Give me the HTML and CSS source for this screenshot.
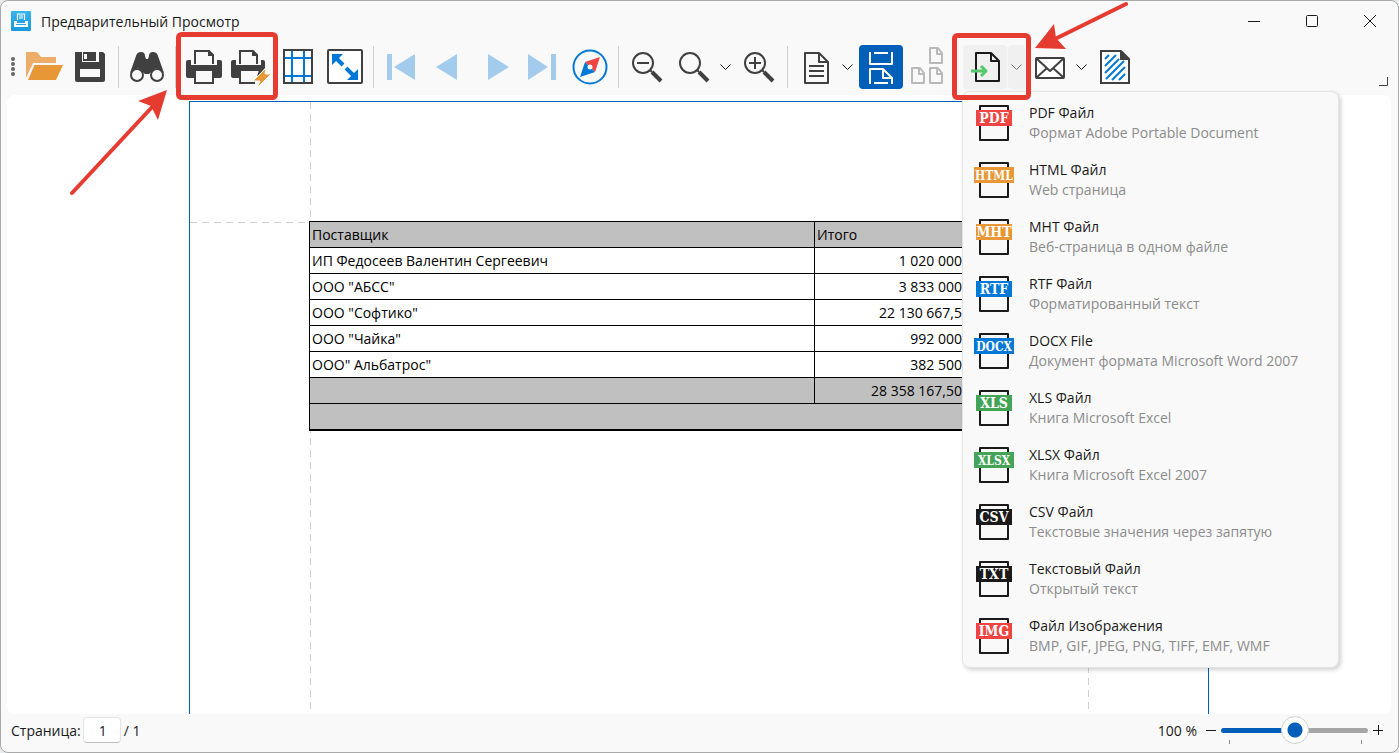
FILE: index.html
```html
<!DOCTYPE html>
<html lang="ru">
<head>
    <meta charset="UTF-8">
    <meta name="viewport" content="width=device-width, initial-scale=1.0">
    <title>Предварительный Просмотр</title>
    <link rel="stylesheet" href="styles.css">
</head>
<body>
    <div class="window">
        <header class="titlebar">
            <svg class="app-icon" viewBox="0 0 20 20">
                <defs>
                    <linearGradient id="appBlue" x1="0" y1="0" x2="0" y2="1">
                        <stop offset="0" stop-color="#35b4ee"/>
                        <stop offset="1" stop-color="#1a98dc"/>
                    </linearGradient>
                </defs>
                <rect width="20" height="20" rx="1" fill="url(#appBlue)"/>
                <path d="M6.500 9V3h7v6M8 5h4M8 7h4" fill="none" stroke="#fff" stroke-width="1.200"/>
                <path d="M3 10h3v2h8v-2h3v6H3z" fill="#fff"/>
                <path d="M5 13.500h10" stroke="#2aa6e4"/>
            </svg>
            <h1>Предварительный Просмотр</h1>
            <div class="window-buttons">
                <button type="button" aria-label="Свернуть"><svg viewBox="0 0 12 12"><path d="M0 6.500h12"/></svg></button>
                <button type="button" aria-label="Развернуть"><svg viewBox="0 0 12 12"><rect x=".5" y=".5" width="11" height="11" rx="1"/></svg></button>
                <button type="button" aria-label="Закрыть"><svg viewBox="0 0 12 12"><path d="M0 0l12 12M12 0L0 12"/></svg></button>
            </div>
        </header>

        <nav class="toolbar">
            <svg class="grip" viewBox="0 0 7 44"><circle cx="2" cy="14" r="2"/><circle cx="2" cy="19" r="2"/><circle cx="2" cy="24" r="2"/><circle cx="2" cy="29" r="2"/></svg>
            <button type="button" class="tool" aria-label="Открыть">
                <svg viewBox="0 0 44 44">
                    <path d="M5 7h11l4 5h15v6H12L5 33z" fill="#edad69"/>
                    <path d="M13.500 20H42l-7 15H7z" fill="#e79736"/>
                </svg>
            </button>
            <button type="button" class="tool" aria-label="Сохранить">
                <svg viewBox="0 0 44 44">
                    <path d="M7 7h7v10h17V7h4l2 2v26q0 2-2 2H9q-2 0-2-2zM12 24v8h20v-8z" fill="#404040" fill-rule="evenodd"/>
                    <path d="M15 7h13v9H15zM16 9v5h3V9z" fill="#404040" fill-rule="evenodd"/>
                </svg>
            </button>
            <span class="separator"></span>
            <button type="button" class="tool" aria-label="Поиск">
                <svg viewBox="0 0 44 44">
                    <path d="M5 28l6-17q1-4 5-4t4 4l1 3h2l1-3q0-4 4-4t5 4l6 17-8-5-7 6h-4l-7-6z" fill="#404040"/>
                    <circle cx="12" cy="30" r="6" fill="#f9f9f9" stroke="#404040" stroke-width="2"/>
                    <circle cx="32" cy="30" r="6" fill="#f9f9f9" stroke="#404040" stroke-width="2"/>
                </svg>
            </button>
            <span class="separator"></span>
            <button type="button" class="tool" aria-label="Печать">
                <svg viewBox="0 0 44 44">
                    <path d="M4 17q0-2 2-2h3v5h26v-5h3q2 0 2 2v14q0 2-2 2H6q-2 0-2-2z" fill="#404040"/>
                    <path d="M13 19V6h14l4 4v9" fill="#f9f9f9" stroke="#404040" stroke-width="2"/>
                    <path d="M26 5v6h6z" fill="#404040"/>
                    <path d="M13 25h18v13H13z" fill="#f9f9f9" stroke="#404040" stroke-width="2"/>
                </svg>
            </button>
            <button type="button" class="tool" aria-label="Быстрая печать">
                <svg viewBox="0 0 44 44">
                    <path d="M2 17q0-2 2-2h3v5h25v-5h2q2 0 2 2v6l-9 10H4q-2 0-2-2z" fill="#404040"/>
                    <path d="M11 19V6h13l4 4v9" fill="#f9f9f9" stroke="#404040" stroke-width="2"/>
                    <path d="M23 5v6h6z" fill="#404040"/>
                    <path d="M30 25H11v13h15" fill="#f9f9f9" stroke="#404040" stroke-width="2"/>
                    <path d="M37 23L24 36h7l-3 7 14-14h-6z" fill="#e79736" stroke="#f9f9f9"/>
                </svg>
            </button>
            <button type="button" class="tool" aria-label="Поля">
                <svg viewBox="0 0 44 44">
                    <path d="M8 5h28v33H8z" fill="#fff"/>
                    <path d="M16 6v31M28 6v31M9 13h26M9 31h26" stroke="#0078d7" stroke-width="2"/>
                    <rect x="8" y="5" width="28" height="33" fill="none" stroke="#404040" stroke-width="2"/>
                </svg>
            </button>
            <button type="button" class="tool" aria-label="Масштаб">
                <svg viewBox="0 0 44 44">
                    <rect x="5" y="5" width="34" height="33" rx="1" fill="#fff" stroke="#404040" stroke-width="2"/>
                    <path d="M9 9h11L9 20zM35 35H24l11-11z" fill="#0078d7"/>
                    <path d="M12 12l8 8M23 23l9 9" stroke="#0078d7" stroke-width="4"/>
                </svg>
            </button>
            <span class="separator"></span>
            <button type="button" class="tool" aria-label="Первая страница" disabled><svg viewBox="0 0 44 44"><path d="M7 9h5v26H7zM35 9v26L14 22z" fill="#a3ccec"/></svg></button>
            <button type="button" class="tool" aria-label="Предыдущая страница" disabled><svg viewBox="0 0 44 44"><path d="M30 9v26L9 22z" fill="#a3ccec"/></svg></button>
            <button type="button" class="tool" aria-label="Следующая страница" disabled><svg viewBox="0 0 44 44"><path d="M14 9v26l21-13z" fill="#a3ccec"/></svg></button>
            <button type="button" class="tool" aria-label="Последняя страница" disabled><svg viewBox="0 0 44 44"><path d="M7 9v26l20-13zM30 9h5v26h-5z" fill="#a3ccec"/></svg></button>
            <button type="button" class="tool" aria-label="Навигация">
                <svg viewBox="0 0 44 44">
                    <circle cx="22" cy="22" r="16.500" fill="#f9f9f9" stroke="#0078d7" stroke-width="2"/>
                    <path d="M32 12l-5 15-10-10z" fill="#ef4442"/>
                    <path d="M12 32l5-15 10 10z" fill="#0078d7"/>
                    <circle cx="22" cy="22" r="2.500" fill="#f9f9f9"/>
                </svg>
            </button>
            <span class="separator"></span>
            <button type="button" class="tool" aria-label="Уменьшить"><svg class="line-icon" viewBox="0 0 44 44"><circle cx="18" cy="18" r="10"/><path d="M12 18h12M25 25l2 2"/><path d="M27 27l9 9" stroke-width="4"/></svg></button>
            <div class="split">
                <button type="button" class="tool" aria-label="Масштаб страницы"><svg class="line-icon" viewBox="0 0 44 44"><circle cx="18" cy="18" r="10"/><path d="M25 25l2 2"/><path d="M27 27l9 9" stroke-width="4"/></svg></button>
                <button type="button" class="drop" aria-label="Выбрать масштаб"><svg viewBox="0 0 11 6"><path d="M.5 .5l5 5 5-5"/></svg></button>
            </div>
            <button type="button" class="tool" aria-label="Увеличить"><svg class="line-icon" viewBox="0 0 44 44"><circle cx="18" cy="18" r="10"/><path d="M12 18h12M18 12v12M25 25l2 2"/><path d="M27 27l9 9" stroke-width="4"/></svg></button>
            <span class="separator"></span>
            <div class="split">
                <button type="button" class="tool" aria-label="Вид страницы">
                    <svg class="line-icon" viewBox="0 0 44 44">
                        <path d="M12 8h13l9 9v21H11V8zM25 8v9h9"/>
                        <path d="M15 21h15M15 26h15M15 31h15"/>
                    </svg>
                </button>
                <button type="button" class="drop" aria-label="Выбрать вид"><svg viewBox="0 0 11 6"><path d="M.5 .5l5 5 5-5"/></svg></button>
            </div>
            <button type="button" class="tool active" aria-label="Непрерывный вид">
                <svg class="line-icon" viewBox="0 0 44 44"><path d="M11 7v12h22V7M15 8h14M11 39V24h13l9 9v6M24 24v9h9M15 38h14"/></svg>
            </button>
            <button type="button" class="tool" aria-label="Несколько страниц" disabled>
                <svg class="line-icon muted" viewBox="0 0 44 44">
                    <path d="M24 3h8l4 5v10H24zM31 3v6h5"/>
                    <path d="M6 23h8l4 5v10H6zM13 23v6h5"/>
                    <path d="M24 23h8l4 5v10H24zM31 23v6h5"/>
                </svg>
            </button>
            <span class="separator"></span>
            <div class="split open">
                <button type="button" class="tool" aria-label="Экспорт">
                    <svg class="line-icon" viewBox="0 0 44 44">
                        <path d="M13 8h15l8 8v20H13zM28 8v8h8" stroke="#1a1a1a"/>
                        <path d="M8 26h15M18 21l5 5-5 5" stroke="#53c96c" stroke-width="3"/>
                    </svg>
                </button>
                <button type="button" class="drop" aria-label="Формат экспорта"><svg viewBox="0 0 11 6"><path d="M.5 .5l5 5 5-5"/></svg></button>

                <!-- Export formats -->
                <div class="export-menu">
                    <button type="button" class="export-item">
                        <svg class="file-icon red" viewBox="0 0 40 36"><path d="M6 1h28v34H6z"/><rect x="2" y="5" width="36" height="16"/><text x="20" y="18">PDF</text></svg>
                        <span class="item-text"><span>PDF Файл</span><small>Формат Adobe Portable Document</small></span>
                    </button>
                    <button type="button" class="export-item">
                        <svg class="file-icon orange wide" viewBox="0 0 40 36"><path d="M6 1h28v34H6z"/><rect x="0" y="5" width="40" height="16"/><text x="20" y="18">HTML</text></svg>
                        <span class="item-text"><span>HTML Файл</span><small>Web страница</small></span>
                    </button>
                    <button type="button" class="export-item">
                        <svg class="file-icon orange" viewBox="0 0 40 36"><path d="M6 1h28v34H6z"/><rect x="2" y="5" width="36" height="16"/><text x="20" y="18">MHT</text></svg>
                        <span class="item-text"><span>MHT Файл</span><small>Веб-страница в одном файле</small></span>
                    </button>
                    <button type="button" class="export-item">
                        <svg class="file-icon blue" viewBox="0 0 40 36"><path d="M6 1h28v34H6z"/><rect x="2" y="5" width="36" height="16"/><text x="20" y="18">RTF</text></svg>
                        <span class="item-text"><span>RTF Файл</span><small>Форматированный текст</small></span>
                    </button>
                    <button type="button" class="export-item">
                        <svg class="file-icon blue wide" viewBox="0 0 40 36"><path d="M6 1h28v34H6z"/><rect x="0" y="5" width="40" height="16"/><text x="20" y="18">DOCX</text></svg>
                        <span class="item-text"><span>DOCX File</span><small>Документ формата Microsoft Word 2007</small></span>
                    </button>
                    <button type="button" class="export-item">
                        <svg class="file-icon green" viewBox="0 0 40 36"><path d="M6 1h28v34H6z"/><rect x="2" y="5" width="36" height="16"/><text x="20" y="18">XLS</text></svg>
                        <span class="item-text"><span>XLS Файл</span><small>Книга Microsoft Excel</small></span>
                    </button>
                    <button type="button" class="export-item">
                        <svg class="file-icon green wide" viewBox="0 0 40 36"><path d="M6 1h28v34H6z"/><rect x="0" y="5" width="40" height="16"/><text x="20" y="18">XLSX</text></svg>
                        <span class="item-text"><span>XLSX Файл</span><small>Книга Microsoft Excel 2007</small></span>
                    </button>
                    <button type="button" class="export-item">
                        <svg class="file-icon" viewBox="0 0 40 36"><path d="M6 1h28v34H6z"/><rect x="2" y="5" width="36" height="16"/><text x="20" y="18">CSV</text></svg>
                        <span class="item-text"><span>CSV Файл</span><small>Текстовые значения через запятую</small></span>
                    </button>
                    <button type="button" class="export-item">
                        <svg class="file-icon" viewBox="0 0 40 36"><path d="M6 1h28v34H6z"/><rect x="2" y="5" width="36" height="16"/><text x="20" y="18">TXT</text></svg>
                        <span class="item-text"><span>Текстовый Файл</span><small>Открытый текст</small></span>
                    </button>
                    <button type="button" class="export-item">
                        <svg class="file-icon red" viewBox="0 0 40 36"><path d="M6 1h28v34H6z"/><rect x="2" y="5" width="36" height="16"/><text x="20" y="18">IMG</text></svg>
                        <span class="item-text"><span>Файл Изображения</span><small>BMP, GIF, JPEG, PNG, TIFF, EMF, WMF</small></span>
                    </button>
                </div>
            </div>
            <div class="split">
                <button type="button" class="tool" aria-label="Отправить по почте">
                    <svg class="line-icon" viewBox="0 0 44 44">
                        <rect x="8" y="13" width="28" height="20" rx="1" fill="#fff"/>
                        <path d="M8 13l14 13 14-13M8 33l11-10M36 33L25 23"/>
                    </svg>
                </button>
                <button type="button" class="drop" aria-label="Формат вложения"><svg viewBox="0 0 11 6"><path d="M.5 .5l5 5 5-5"/></svg></button>
            </div>
            <button type="button" class="tool" aria-label="Водяной знак">
                <svg viewBox="0 0 44 44">
                    <path d="M8 6h20l8 8v24H8z" fill="#fff" stroke="#404040" stroke-width="2"/>
                    <path d="M27 5v10h10z" fill="#404040"/>
                    <path d="M12 14l4-4M12 21L23 10M12 28l14-14M13 34l18-18M19 35l13-13M26 35l6-6" fill="none" stroke="#0078d7" stroke-width="2"/>
                </svg>
            </button>
            <svg class="toolbar-corner" viewBox="0 0 9 9"><path d="M8.500 0v8.500H0"/></svg>
        </nav>

        <main class="viewer">
            <div class="page">
                <table class="report">
                    <thead>
                        <tr><th class="supplier">Поставщик</th><th class="total">Итого</th></tr>
                    </thead>
                    <tbody>
                        <tr><td>ИП Федосеев Валентин Сергеевич</td><td class="number">1 020 000</td></tr>
                        <tr><td>ООО "АБСС"</td><td class="number">3 833 000</td></tr>
                        <tr><td>ООО "Софтико"</td><td class="number">22 130 667,5</td></tr>
                        <tr><td>ООО "Чайка"</td><td class="number">992 000</td></tr>
                        <tr><td>ООО" Альбатрос"</td><td class="number">382 500</td></tr>
                    </tbody>
                    <tfoot>
                        <tr><td></td><td class="number">28 358 167,50</td></tr>
                        <tr><td colspan="2"></td></tr>
                    </tfoot>
                </table>
            </div>
        </main>

        <footer class="statusbar">
            <label for="pageNumber">Страница:</label>
            <input type="text" class="page-number" id="pageNumber" value="1">
            <span>/ 1</span>
            <label class="zoom-label" for="zoomRange">100 %</label>
            <button type="button" class="zoom-step" aria-label="Уменьшить масштаб"><svg viewBox="0 0 10 10"><path d="M0 5.500h10"/></svg></button>
            <div class="zoom-slider"><input type="range" id="zoomRange" min="0" max="100" value="50"></div>
            <button type="button" class="zoom-step" aria-label="Увеличить масштаб"><svg viewBox="0 0 10 10"><path d="M0 5.500h10M5.500 0v10"/></svg></button>
        </footer>

        <!-- Red callouts over the print and export buttons -->
        <svg class="callouts">
            <rect x="178.500" y="34.500" width="97" height="63" rx="3"/>
            <rect x="954.500" y="35.500" width="74" height="62" rx="3"/>
            <path d="M72 193l82-88M1126 4l-71 35"/>
            <polygon points="167,90 138,101 151,106 158,120"/>
            <polygon points="1035,48 1054,24 1056,38 1066,49"/>
        </svg>
    </div>
</body>
</html>
```
FILE: styles.css
```css
* {
    box-sizing: border-box;
}

body {
    margin: 0;
    background-color: #e8eaec;
    font-family: "Open Sans", "Noto Sans", sans-serif;
    font-size: 14px;
    color: #1a1a1a;
}

button {
    padding: 0;
    border: none;
    background: none;
    font: inherit;
    color: inherit;
}

svg {
    display: block;
}

.window {
    position: relative;
    display: flex;
    flex-direction: column;
    height: 100vh;
    background-color: #f9f9f9;
    border: 1px solid #a9a9a9;
    border-radius: 8px;
    overflow: hidden;
}

/* Title bar */
.titlebar {
    display: flex;
    align-items: center;
    height: 40px;
    padding-left: 10px;
    gap: 10px;
}

.app-icon {
    width: 20px;
    height: 20px;
}

.titlebar h1 {
    margin: 0;
    font-size: 14px;
    font-weight: normal;
}

.window-buttons {
    display: flex;
    margin-left: auto;
}

.window-buttons button {
    display: flex;
    justify-content: center;
    align-items: center;
    width: 58px;
    height: 40px;
    padding-left: 2px;
}

.window-buttons svg {
    width: 12px;
    height: 12px;
    overflow: visible;
    fill: none;
    stroke: #1a1a1a;
}

/* Toolbar */
.toolbar {
    display: flex;
    align-items: center;
    gap: 3px;
    height: 54px;
    padding: 0 10px 2px;
}

.grip {
    width: 7px;
    height: 44px;
    fill: #666;
}

.tool {
    width: 44px;
    height: 44px;
    border-radius: 4px;
}

.tool svg {
    width: 44px;
    height: 44px;
}

.separator {
    width: 1px;
    height: 42px;
    margin: 0 3px;
    background-color: #d0d0d0;
}

.line-icon {
    fill: none;
    stroke: #404040;
    stroke-width: 2;
    stroke-linejoin: round;
}

.tool.active {
    background-color: #005fb8;
}

.active .line-icon {
    stroke: #fff;
}

.line-icon.muted {
    stroke: #b9b9b9;
}

.split {
    position: relative;
    display: flex;
    gap: 1px;
}

.drop {
    display: flex;
    justify-content: center;
    align-items: center;
    width: 17px;
    height: 44px;
    border-radius: 4px;
}

.drop svg {
    width: 11px;
    height: 6px;
    fill: none;
    stroke: #1a1a1a;
}

.open .tool,
.open .drop {
    background-color: #f0f0f0;
}

.open .drop svg {
    stroke: #777;
}

.toolbar-corner {
    align-self: flex-end;
    width: 9px;
    height: 9px;
    margin: 0 0 7px auto;
    fill: none;
    stroke: #404040;
}

/* Export menu */
.export-menu {
    position: absolute;
    top: 46px;
    left: -1px;
    z-index: 2;
    width: 377px;
    padding: 2px 0 3px;
    background-color: #f9f9f9;
    border: 1px solid #e4e4e4;
    border-radius: 8px;
    box-shadow: 2px 2px 4px rgba(0, 0, 0, 0.18);
}

.export-item {
    display: flex;
    align-items: center;
    gap: 15px;
    width: 100%;
    height: 57px;
    padding-left: 11px;
    text-align: left;
}

.item-text {
    display: flex;
    flex-direction: column;
    line-height: 20px;
}

.item-text small {
    font-size: 14px;
    color: #8c8c8c;
}

.file-icon {
    width: 40px;
    height: 36px;
    fill: #1a1a1a;
}

.file-icon path {
    fill: none;
    stroke: #1a1a1a;
    stroke-width: 2;
    stroke-linejoin: round;
}

.file-icon text {
    fill: #fff;
    font-family: "DejaVu Serif Condensed", "DejaVu Serif", serif;
    font-size: 14px;
    font-weight: bold;
    text-anchor: middle;
}

.file-icon.wide text {
    font-size: 12px;
}

.file-icon.red {
    fill: #ef4442;
}

.file-icon.orange {
    fill: #e79736;
}

.file-icon.blue {
    fill: #0078d7;
}

.file-icon.green {
    fill: #43a457;
}

/* Document */
.viewer {
    flex: 1;
    min-height: 0;
    margin: 0 7px 0 6px;
    padding-top: 6px;
    background-color: #fff;
    border-radius: 8px;
    overflow: hidden;
}

/* The three gradients are the dashed margin guides */
.page {
    width: 1020px;
    height: 100%;
    margin: 0 auto;
    padding: 119px;
    border: 1px solid #005fb8;
    border-bottom: none;
    background-image:
        repeating-linear-gradient(to bottom, #d0d0d0 0 7px, transparent 7px 12px),
        repeating-linear-gradient(to bottom, #d0d0d0 0 7px, transparent 7px 12px),
        repeating-linear-gradient(to right, #d0d0d0 0 7px, transparent 7px 12px);
    background-size: 1px 100%, 1px 100%, 100% 1px;
    background-position: 120px 0, 898px 0, 0 120px;
    background-repeat: no-repeat;
}

.report {
    border-collapse: collapse;
    border-bottom: 2px solid #000;
    background-color: #fff;
    color: #000;
}

.report th,
.report td {
    height: 26px;
    padding: 0 2px;
    border: 1px solid #000;
    font-weight: normal;
    line-height: 20px;
    text-align: left;
}

.report thead,
.report tfoot {
    background-color: #c0c0c0;
}

.report .supplier {
    width: 505px;
}

.report .total {
    width: 150px;
}

.report .number {
    text-align: right;
}

/* Status bar */
.statusbar {
    display: flex;
    align-items: center;
    height: 38px;
    padding: 0 15px 6px 10px;
}

.page-number {
    width: 38px;
    height: 26px;
    margin: 0 3px 0 2px;
    padding: 0 0 0 2px;
    border: 1px solid #e4e4e4;
    border-bottom-color: #bcbcbc;
    border-radius: 4px;
    background-color: #fff;
    font: inherit;
    color: inherit;
    text-align: center;
}

.zoom-label {
    margin: 0 9px 0 auto;
}

.zoom-step svg {
    width: 10px;
    height: 10px;
    fill: none;
    stroke: #1a1a1a;
}

.zoom-slider {
    position: relative;
    width: 147px;
    margin: 0 5px;
}

.zoom-slider::before,
.zoom-slider::after {
    content: "";
    position: absolute;
    top: 24px;
    width: 1px;
    height: 4px;
    background-color: #8c8c8c;
}

.zoom-slider::before {
    left: 8px;
}

.zoom-slider::after {
    right: 6px;
}

.zoom-slider input {
    display: block;
    width: 100%;
    height: 28px;
    margin: 0;
    appearance: none;
    background: none;
}

.zoom-slider input::-webkit-slider-runnable-track {
    height: 5px;
    border-radius: 3px;
    background-image: linear-gradient(to right, #005fb8 50%, #a6a6a6 50%);
}

.zoom-slider input::-webkit-slider-thumb {
    appearance: none;
    width: 28px;
    height: 28px;
    margin-top: -12px;
    border: 1px solid #d0d0d0;
    border-radius: 50%;
    background-color: #fff;
    background-image: radial-gradient(circle, #005fb8 7px, transparent 8px);
}

/* Callouts */
.callouts {
    position: absolute;
    top: -1px;
    left: -1px;
    z-index: 3;
    width: 100%;
    height: 100%;
    pointer-events: none;
    fill: none;
    stroke: #e63b31;
    stroke-width: 5;
}

.callouts path {
    stroke-width: 4;
    stroke-linecap: round;
}

.callouts polygon {
    fill: #e63b31;
    stroke: none;
}
```
